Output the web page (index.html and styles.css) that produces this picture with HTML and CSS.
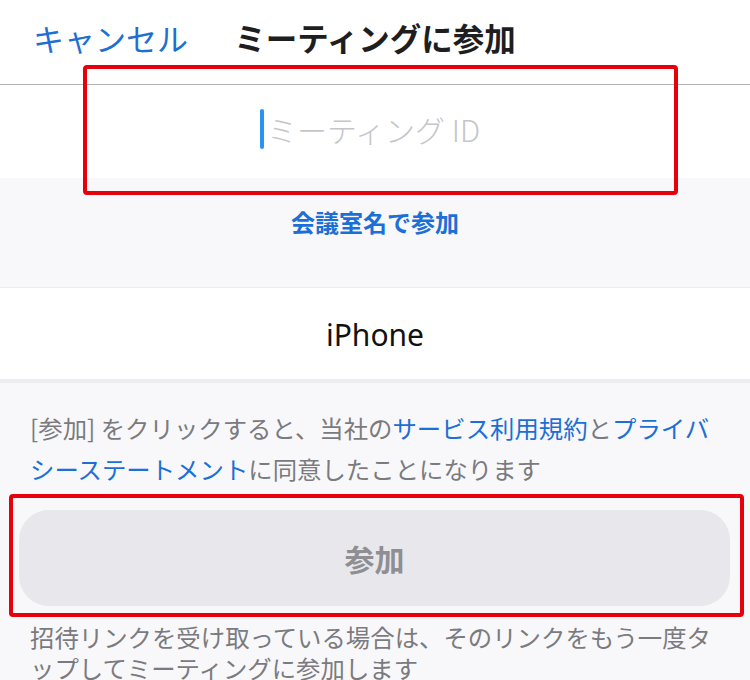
FILE: index.html
```html
<!DOCTYPE html>
<html lang="ja">
<head>
<meta charset="utf-8">
<title>ミーティングに参加</title>
<link rel="stylesheet" href="styles.css">
</head>
<body>
<div class="screen">
  <header class="header">
    <span class="cancel">キャンセル</span>
    <h1 class="title">ミーティングに参加</h1>
    <span></span>
  </header>
  <section class="input-row">
    <span class="cursor"></span><span class="placeholder">ミーティング ID</span>
  </section>
  <div class="room-link">会議室名で参加</div>
  <section class="name-row">iPhone</section>
  <p class="terms">[参加] をクリックすると、当社の<span class="link">サービス利用規約</span>と<span class="link">プライバシーステートメント</span>に同意したことになります</p>
  <div class="btn-wrap"><button class="join-btn">参加</button></div>
  <p class="hint">招待リンクを受け取っている場合は、そのリンクをもう一度タップしてミーティングに参加します</p>
  <div class="highlight highlight-id"></div>
  <div class="highlight highlight-btn"></div>
</div>
</body>
</html>
```
FILE: styles.css
```css
* { box-sizing: border-box; }
html, body {
  margin: 0;
  padding: 0;
  background: #f8f8fa;
}
body {
  font-family: "Noto Sans CJK JP", "Noto Sans", sans-serif;
  width: 750px;
  height: 680px;
  overflow: hidden;
}
.screen {
  position: relative;
  width: 750px;
}
.header {
  height: 85px;
  background: #fff;
  border-bottom: 1px solid #b4b4b6;
  display: grid;
  grid-template-columns: 1fr auto 1fr;
  align-items: center;
  padding-bottom: 10px;
}
.cancel {
  padding-left: 33px;
  font-size: 31px;
  color: #1f6fd3;
  font-weight: 400;
}
.title {
  margin: 0;
  font-size: 31.5px;
  font-weight: 700;
  color: #1e1e20;
}
.input-row {
  height: 93px;
  background: #fff;
  display: flex;
  align-items: center;
  justify-content: center;
  padding-right: 10px;
  padding-bottom: 6px;
}
.cursor {
  width: 4px;
  height: 40px;
  background: #2a95ef;
  border-radius: 2px;
  margin-right: 3px;
}
.placeholder {
  font-size: 30px;
  font-weight: 300;
  color: #c6c6ca;
}
.room-link {
  height: 109px;
  padding-top: 28px;
  text-align: center;
  font-size: 24px;
  line-height: 32px;
  font-weight: 700;
  color: #1c6fd6;
}
.name-row {
  height: 96px;
  background: #fff;
  border-top: 1px solid #ececee;
  border-bottom: 4px solid #ededef;
  display: flex;
  align-items: center;
  justify-content: center;
  font-family: "Noto Sans", sans-serif;
  font-size: 30px;
  color: #111;
  padding-top: 2px;
}
.terms {
  margin: 0;
  padding: 24px 30px 0 30px;
  font-size: 24.4px;
  line-height: 41px;
  color: #7b7b7f;
  line-break: normal;
}
.link { color: #1c6fd6; }
.btn-wrap {
  padding: 21px 20px 0 19px;
}
.join-btn {
  display: block;
  width: 100%;
  height: 96px;
  border: none;
  border-radius: 30px;
  background: #e7e7ec;
  font-family: "Noto Sans CJK JP", sans-serif;
  font-size: 30px;
  font-weight: 700;
  color: #8e8e93;
}
.hint {
  margin: 0;
  padding: 15px 30px 0 30px;
  font-size: 24.4px;
  line-height: 31px;
  color: #7b7b7f;
  line-break: normal;
}
.highlight {
  position: absolute;
  border: 4px solid #e6000b;
  border-radius: 4px;
}
.highlight-id {
  left: 83px;
  top: 65px;
  width: 595px;
  height: 130px;
}
.highlight-btn {
  left: 9px;
  top: 494px;
  width: 735px;
  height: 123px;
}
```
